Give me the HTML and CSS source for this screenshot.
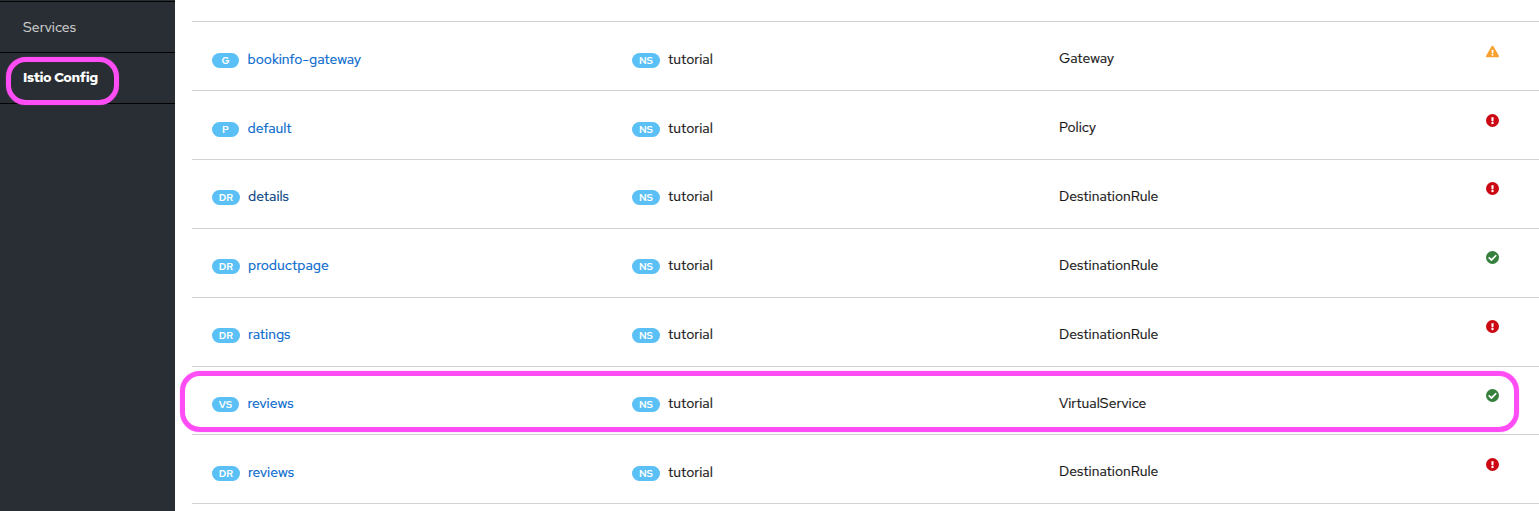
FILE: index.html
```
<!DOCTYPE html>
<html lang="en">
<head>
<meta charset="utf-8">
<title>Istio Config</title>
<link rel="stylesheet" href="styles.css">
</head>
<body>
<svg class="defs" aria-hidden="true">
  <symbol id="warning" viewBox="0 0 576 512"><path fill="currentColor" d="M569.5 440c18.500 32-4.700 72-41.600 72H48.100c-36.900 0-60-40-41.600-72L246.400 24c18.500-32 64.700-32 83.200 0l239.900 416zM288 354a46 46 0 1 0 0 92 46 46 0 0 0 0-92zm-43.700-165.300l7.400 136c.4 6.400 5.600 11.300 12 11.300h48.500c6.400 0 11.600-5 12-11.300l7.400-136c.4-6.900-5.100-12.700-12-12.700h-63.400c-6.800 0-12.300 5.800-11.900 12.700z"/></symbol>
  <symbol id="error" viewBox="8 8 496 496"><path fill="currentColor" d="M504 256a248 248 0 1 1-496 0 248 248 0 0 1 496 0zM256 306a46 46 0 1 0 0 92 46 46 0 0 0 0-92zm-43.700-165.300l7.400 136c.4 6.400 5.600 11.300 12 11.300h48.500c6.400 0 11.600-5 12-11.300l7.400-136c.4-6.900-5.100-12.700-12-12.700h-63.400c-6.800 0-12.300 5.800-11.900 12.700z"/></symbol>
  <symbol id="ok" viewBox="8 8 496 496"><path fill="currentColor" d="M504 256a248 248 0 1 1-496 0 248 248 0 0 1 496 0zM227.300 387.300l184-184c6.200-6.200 6.200-16.400 0-22.600l-22.600-22.600c-6.200-6.200-16.400-6.200-22.600 0L216 308.100l-70.100-70.100c-6.200-6.200-16.400-6.200-22.600 0l-22.600 22.600c-6.200 6.200-6.200 16.400 0 22.600l104 104c6.200 6.300 16.400 6.300 22.600.1z"/></symbol>
</svg>
<div class="app">
  <nav class="sidebar">
    <a class="nav-item">Services</a>
    <a class="nav-item active"><span>Istio Config</span></a>
  </nav>
  <main class="table">
    <div class="row low"><div class="cell"><span class="badge single">G</span><a class="link gateway">bookinfo-gateway</a></div><div class="cell"><span class="badge">NS</span><span class="ns">tutorial</span></div><div class="type">Gateway</div><svg class="status orange"><use href="#warning"/></svg></div>
    <div class="row low"><div class="cell"><span class="badge single">P</span><a class="link">default</a></div><div class="cell"><span class="badge">NS</span><span class="ns">tutorial</span></div><div class="type">Policy</div><svg class="status red"><use href="#error"/></svg></div>
    <div class="row"><div class="cell"><span class="badge">DR</span><a class="link hovered">details</a></div><div class="cell"><span class="badge">NS</span><span class="ns">tutorial</span></div><div class="type">DestinationRule</div><svg class="status red"><use href="#error"/></svg></div>
    <div class="row"><div class="cell"><span class="badge">DR</span><a class="link">productpage</a></div><div class="cell"><span class="badge">NS</span><span class="ns">tutorial</span></div><div class="type">DestinationRule</div><svg class="status green"><use href="#ok"/></svg></div>
    <div class="row"><div class="cell"><span class="badge">DR</span><a class="link">ratings</a></div><div class="cell"><span class="badge">NS</span><span class="ns">tutorial</span></div><div class="type">DestinationRule</div><svg class="status red"><use href="#error"/></svg></div>
    <div class="row short"><div class="cell"><span class="badge single">VS</span><a class="link">reviews</a></div><div class="cell"><span class="badge">NS</span><span class="ns">tutorial</span></div><div class="type">VirtualService</div><svg class="status green"><use href="#ok"/></svg></div>
    <div class="row low"><div class="cell"><span class="badge">DR</span><a class="link">reviews</a></div><div class="cell"><span class="badge">NS</span><span class="ns">tutorial</span></div><div class="type">DestinationRule</div><svg class="status red"><use href="#error"/></svg></div>
  </main>
  <div class="ring ring-nav"></div>
  <div class="ring ring-row"></div>
</div>
</body>
</html>
```
FILE: styles.css
```
* { box-sizing: border-box; }
body { margin: 0; background: #fff; color: #151515; font: 14px/20px "Red Hat Text", Inter, sans-serif; }
.defs { position: absolute; width: 0; height: 0; }
.app { position: relative; display: flex; height: 511px; overflow: hidden; }
.sidebar { width: 175px; flex: none; background: #292e34; padding-top: 1px; }
.nav-item { display: block; height: 51px; padding: 15px 23px; border-top: 1px solid #030303; color: #d1d1d1; -webkit-text-stroke: 0.15px; }
.nav-item.active { height: 52px; padding-top: 14px; border-bottom: 1px solid #030303; color: #fff; font-weight: 700; letter-spacing: -0.42px; -webkit-text-stroke: 0; }
.table { flex: 1; margin: 21px 0 0 17px; height: 483px; border-bottom: 1px solid #d2d2d2; }
.row { display: grid; grid-template-columns: 420px 427px 427px 1fr; height: 69px; padding: 26px 0 0 20px; border-top: 1px solid #d2d2d2; }
.row.short { height: 68px; }
.cell { display: flex; align-items: flex-start; }
.low .cell { margin-top: 1px; }
.badge { width: 28px; height: 15px; margin: 4px 8px 0 0; border-radius: 8px; background: #5bc0f5; color: #fff; font-size: 10px; line-height: 15px; font-weight: 600; text-align: center; }
.badge.single { width: 27px; margin-right: 8.5px; }
.link, .ns, .type { -webkit-text-stroke: 0.2px; }
.link { color: #06c; }
.link.hovered { color: #004080; }
.status { width: 13px; height: 13px; margin-top: -4px; }
.low .status { margin-top: -3px; }
.orange { color: #f9a12e; }
.red { color: #cc0814; }
.green { color: #35803c; }
.ring { position: absolute; border: 5px solid #ff4df5; box-shadow: 0 0 1px #ff4df5; }
.ring-nav { left: 6px; top: 57px; width: 113px; height: 48px; border-radius: 20px; }
.ring-row { left: 180px; top: 371px; width: 1339px; height: 61px; border-radius: 20px; }
```
